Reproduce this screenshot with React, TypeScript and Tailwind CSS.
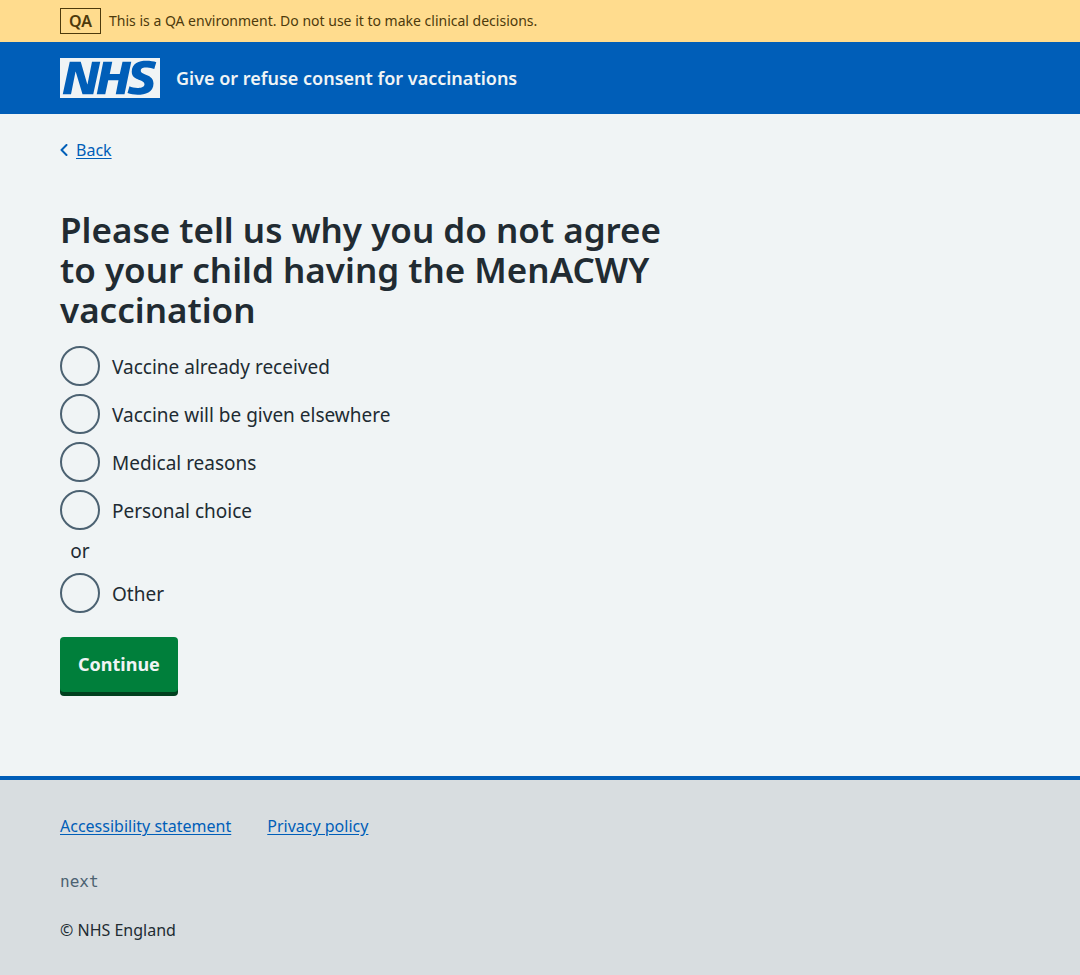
const reasons = [
  { value: "already-received", label: "Vaccine already received" },
  { value: "given-elsewhere", label: "Vaccine will be given elsewhere" },
  { value: "medical-reasons", label: "Medical reasons" },
  { value: "personal-choice", label: "Personal choice" },
];

function Radio({ value, label }: { value: string; label: string }) {
  return (
    <div className="flex h-10 items-center gap-3">
      <input
        type="radio"
        name="reason"
        id={value}
        value={value}
        className="size-10 shrink-0 cursor-pointer appearance-none rounded-full border-2 border-[#4c6272] checked:bg-[radial-gradient(circle,#212b32_10px,transparent_11px)]"
      />
      <label htmlFor={value} className="cursor-pointer pt-0.5">
        {label}
      </label>
    </div>
  );
}

function Logo() {
  return (
    <svg viewBox="0 0 200 80" className="h-10 w-[100px] shrink-0 text-[#f0f4f5]" role="img" aria-label="NHS">
      <path
        fill="currentColor"
        d="M200 0v80H0V0h200Zm-27.5 5.5c-14.5 0-29 5-29 22 0 10.2 7.7 13.5 14.7 16.3l.7.3c5.4 2 10.1 3.9 10.1 8.4 0 6.5-8.5 7.5-14 7.5s-12.5-1.5-16-3.5L135 70c5.5 2 13.5 3.5 20 3.5 15.5 0 32-4.5 32-22.5 0-19.5-25.5-16.5-25.5-25.5 0-5.5 5.5-6.5 12.5-6.5a35 35 0 0 1 14.5 3l4-13.5c-4.5-2-12-3-20-3Zm-131 2h-22l-14 65H22l9-45h.5l13.5 45h21.5l14-65H64l-9 45h-.5l-13-45Zm63 0h-18l-13 65h17l6-28H117l-5.5 28H129l13.5-65H125L119.5 32h-20l5-24.5Z"
      />
    </svg>
  );
}

export default function App() {
  return (
    <div className="flex min-h-screen flex-col bg-[#f0f4f5] font-['Noto_Sans','Open_Sans',sans-serif] text-[19px] leading-[27px] text-[#212b32]">
      <div className="bg-[#ffdc8e] px-8 py-2 text-[#4d3a0c]">
        <div className="mx-auto flex max-w-[960px] items-center gap-2">
          <strong className="border border-[#4d3a0c] px-2 text-[16px] leading-6 font-semibold">QA</strong>
          <span className="text-[14px] leading-6">
            This is a QA environment. Do not use it to make clinical decisions.
          </span>
        </div>
      </div>

      <header className="bg-[#005eb8] px-8 py-4">
        <div className="mx-auto flex max-w-[960px] items-center gap-4 text-[#f0f4f5]">
          <Logo />
          <a href="#" className="text-[18px] font-semibold">
            Give or refuse consent for vaccinations
          </a>
        </div>
      </header>

      <div className="grow px-8 pt-6 pb-20">
        <div className="mx-auto max-w-[960px]">
          <a href="#" className="flex w-fit items-center gap-2 text-[16px] leading-6 text-[#005eb8]">
            <svg viewBox="0 0 8 12" className="h-3 w-2" fill="none" stroke="currentColor" strokeWidth="2" aria-hidden="true">
              <path d="M6.5 1 1.5 6l5 5" strokeLinecap="round" strokeLinejoin="round" />
            </svg>
            <span className="underline underline-offset-2">Back</span>
          </a>

          <main className="max-w-[640px] pt-12">
            <form onSubmit={(event) => event.preventDefault()}>
              <fieldset>
                <legend className="mb-4 text-[35px] leading-10 font-semibold">
                  <h1>Please tell us why you do not agree to your child having the MenACWY vaccination</h1>
                </legend>
                <div className="flex flex-col gap-2">
                  {reasons.map((reason) => (
                    <Radio key={reason.value} {...reason} />
                  ))}
                  <div className="w-10 text-center">or</div>
                  <Radio value="other" label="Other" />
                </div>
              </fieldset>
              <button
                type="submit"
                className="mt-6 mb-1 cursor-pointer rounded-[4px] bg-[#007f3b] px-[18px] py-[14px] text-[18px] font-bold text-[#f0f4f5] shadow-[0_4px_0_#00401e]"
              >
                Continue
              </button>
            </form>
          </main>
        </div>
      </div>

      <footer className="border-t-4 border-[#005eb8] bg-[#d8dde0] px-8 pt-8 pb-[33px] text-[16px] leading-6">
        <div className="mx-auto max-w-[960px]">
          <ul className="flex gap-9 pt-0.5">
            <li>
              <a href="#" className="text-[#005eb8] underline underline-offset-2">
                Accessibility statement
              </a>
            </li>
            <li>
              <a href="#" className="text-[#005eb8] underline underline-offset-2">
                Privacy policy
              </a>
            </li>
          </ul>
          <p className="mt-8 font-['DejaVu_Sans_Mono',monospace] text-[#4c6272]">next</p>
          <p className="mt-6">© NHS England</p>
        </div>
      </footer>
    </div>
  );
}
